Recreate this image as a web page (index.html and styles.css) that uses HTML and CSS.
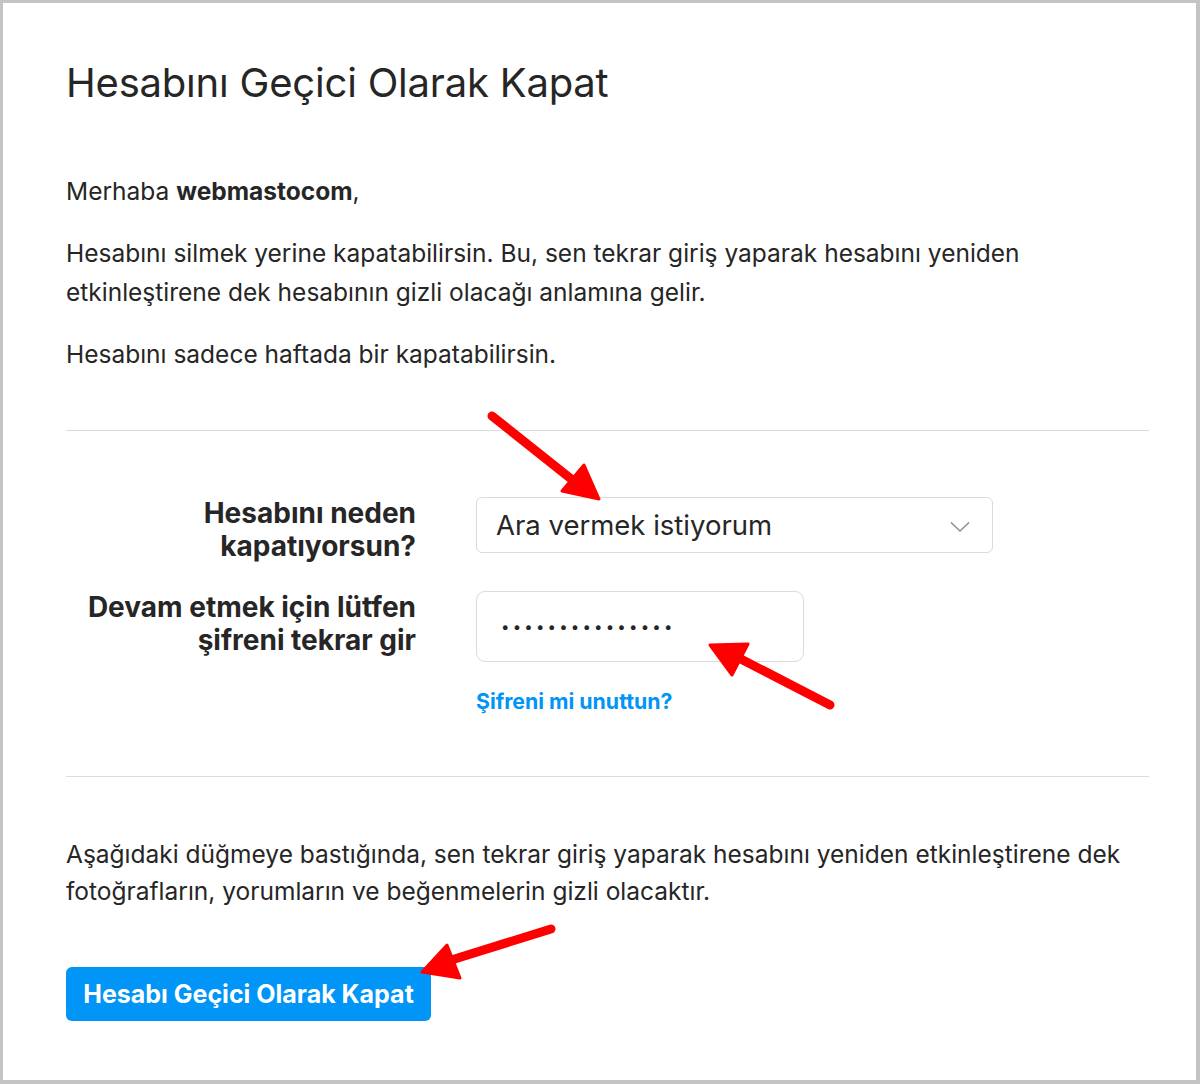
FILE: index.html
```html
<!DOCTYPE html>
<html lang="tr">
<head>
<meta charset="utf-8">
<title>Hesabını Geçici Olarak Kapat</title>
<link rel="stylesheet" href="styles.css">
</head>
<body>
<div class="frame">
  <main class="content">
    <h1 class="title">Hesabını Geçici Olarak Kapat</h1>
    <p class="greet">Merhaba <b>webmastocom</b>,</p>
    <p class="text">Hesabını silmek yerine kapatabilirsin. Bu, sen tekrar giriş yaparak hesabını yeniden etkinleştirene dek hesabının gizli olacağı anlamına gelir.</p>
    <p class="text">Hesabını sadece haftada bir kapatabilirsin.</p>
    <hr class="sep sep-top">
    <div class="form">
      <label class="label">Hesabını neden<br>kapatıyorsun?</label>
      <div class="select">
        <span>Ara vermek istiyorum</span>
        <svg class="chev" width="20" height="12" viewBox="0 0 20 12"><polyline points="1,1.5 10,10 19,1.5" fill="none" stroke="#8e8e8e" stroke-width="1.6"/></svg>
      </div>
      <label class="label">Devam etmek için lütfen<br>şifreni tekrar gir</label>
      <div class="pwcol">
        <div class="password"><span class="dots">•••••••••••••••</span></div>
        <a class="forgot" href="#">Şifreni mi unuttun?</a>
      </div>
    </div>
    <hr class="sep sep-bottom">
    <p class="text note">Aşağıdaki düğmeye bastığında, sen tekrar giriş yaparak hesabını yeniden etkinleştirene dek fotoğrafların, yorumların ve beğenmelerin gizli olacaktır.</p>
    <button class="btn">Hesabı Geçici Olarak Kapat</button>
  </main>
  <svg class="arrows" width="1200" height="1084" viewBox="0 0 1200 1084">
    <g fill="#ff0000" stroke="#ff0000" stroke-linecap="round" stroke-linejoin="round">
      <line x1="492" y1="416" x2="575" y2="482" stroke-width="9"/>
      <polygon points="599,499 562,491 584,465" stroke-width="3"/>
      <line x1="830" y1="705" x2="735" y2="656" stroke-width="9"/>
      <polygon points="710,645 748,644 732,675" stroke-width="3"/>
      <line x1="551" y1="929" x2="445" y2="962" stroke-width="9"/>
      <polygon points="422,972 447,945 460,978" stroke-width="3"/>
    </g>
  </svg>
</div>
</body>
</html>
```

FILE: styles.css
```css
* { box-sizing: border-box; }
html, body { margin: 0; padding: 0; background: #fff; }
body {
  font-family: Inter, "Liberation Sans", Arial, sans-serif;
  color: #262626;
}
.frame {
  position: relative;
  width: 1200px;
  height: 1084px;
  border: 3px solid #c4c4c4;
  border-right-width: 4px;
  border-bottom-width: 4px;
  overflow: hidden;
}
.content {
  padding: 57px 47px 0 63px;
}
.title {
  margin: 0;
  font-size: 40px;
  font-weight: 400;
  line-height: 46px;
  letter-spacing: -0.2px;
}
.greet {
  margin: 66px 0 0;
  font-size: 24.5px;
  line-height: 39px;
}
.greet b { font-weight: 700; }
.text {
  margin: 23px 0 0;
  font-size: 24.5px;
  line-height: 39px;
}
.sep {
  border: 0;
  border-top: 1px solid #dbdbdb;
  margin: 0;
}
.sep-top { margin-top: 56px; }
.form {
  display: grid;
  grid-template-columns: 350px 1fr;
  column-gap: 60px;
  row-gap: 28px;
  margin-top: 66px;
  align-items: start;
}
.label {
  text-align: right;
  font-weight: 700;
  font-size: 28px;
  line-height: 33px;
}
.select {
  width: 517px;
  height: 56px;
  border: 1px solid #dbdbdb;
  border-radius: 6px;
  display: flex;
  align-items: center;
  justify-content: space-between;
  padding: 0 22px 0 19px;
  font-size: 27.5px;
}
.chev { margin-top: 4px; }
.pwcol {
  display: flex;
  flex-direction: column;
  align-items: flex-start;
}
.password {
  width: 328px;
  height: 71px;
  border: 1px solid #dbdbdb;
  border-radius: 9px;
  display: flex;
  align-items: center;
  padding-left: 24px;
}
.dots {
  font-size: 15px;
  letter-spacing: 3.2px;
  color: #262626;
}
.forgot {
  margin-top: 27px;
  color: #0095f6;
  font-weight: 700;
  font-size: 21.3px;
  line-height: 24px;
  text-decoration: none;
}
.sep-bottom { margin-top: 63px; }
.note {
  margin-top: 59px;
  line-height: 37px;
}
.btn {
  display: block;
  margin-top: 57px;
  width: 365px;
  height: 54px;
  border: 0;
  border-radius: 6px;
  background: #0095f6;
  color: #fff;
  font-family: inherit;
  font-weight: 700;
  font-size: 25px;
  padding: 0;
}
.arrows {
  position: absolute;
  left: -3px;
  top: -3px;
  pointer-events: none;
}
```
